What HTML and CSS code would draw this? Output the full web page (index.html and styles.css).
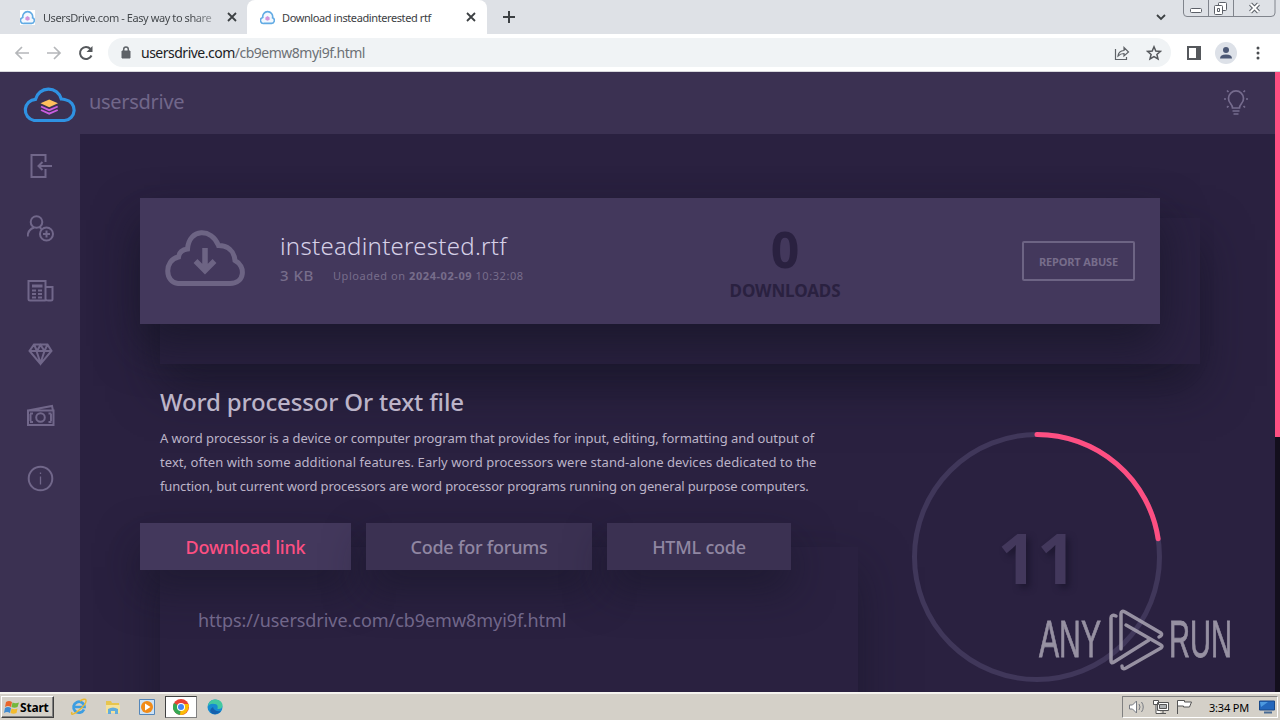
FILE: index.html
```html
<!DOCTYPE html>
<html lang="en">

<head>
    <meta charset="UTF-8">
    <meta name="viewport" content="width=device-width, initial-scale=1.0">
    <title>Download insteadinterested rtf</title>
    <link rel="stylesheet" href="styles.css">
</head>

<body>
    <svg width="0" height="0" class="defs">
        <symbol id="favicon" viewBox="0 0 14 14">
            <path d="M4 12.500h6.500a2.700 2.700 0 0 0 1.200-5.200A4.700 4.700 0 0 0 7 1.500 4.700 4.700 0 0 0 2.600 7 2.800 2.800 0 0 0 4 12.500z" fill="#f3f8fe" stroke="#62abe4" stroke-width="1.500"/>
            <path d="M5 7l2-1.500L9 7v2L7 10 5 9z" fill="#d294dc"/>
        </symbol>
        <symbol id="close" viewBox="0 0 10 10">
            <path d="M1 1l8 8M9 1L1 9" stroke="#3c4043" stroke-width="1.800"/>
        </symbol>
    </svg>

    <div class="tab-strip">
        <div class="tab">
            <svg class="favicon boxed"><use href="#favicon"/></svg>
            <span class="tab-title fade">UsersDrive.com - Easy way to share</span>
            <svg class="tab-close"><use href="#close"/></svg>
        </div>
        <div class="tab active">
            <svg class="favicon"><use href="#favicon"/></svg>
            <span class="tab-title">Download insteadinterested rtf</span>
            <svg class="tab-close"><use href="#close"/></svg>
        </div>
        <svg class="new-tab" width="12" height="12"><path d="M6 0v12M0 6h12" stroke="#3c4043" stroke-width="2"/></svg>
        <svg class="tab-search" width="10" height="7"><path d="M1 1l4 4 4-4" fill="none" stroke="#3c4043" stroke-width="1.800"/></svg>
        <svg class="window-buttons" width="94" height="18" fill="none" stroke="#80848c">
            <path d="M.5 0v13q0 3.500 3.500 3.500h84q4 0 4-3.500V0M25.500 0v16M50.500 0v16"/>
            <g stroke="#5c6068"><rect x="7.500" y="8.500" width="11" height="4" rx="1" fill="#fff"/>
            <rect x="35.500" y="2.500" width="8" height="8" rx="1" fill="#fff"/><rect x="31.500" y="5.500" width="8" height="9" rx="1" fill="#fff"/><path d="M34.500 8.500h2v3h-2z"/></g>
            <path d="M67.500 4l8 8M75.500 4l-8 8" stroke="#5c6068" stroke-width="4"/>
            <path d="M67.500 4l8 8M75.500 4l-8 8" stroke="#fff" stroke-width="2"/>
        </svg>
    </div>

    <div class="toolbar">
        <svg class="nav-icon" width="16" height="16" fill="none" stroke="#b5b7ba" stroke-width="1.700"><path d="M15 8H2M8 2L2 8l6 6"/></svg>
        <svg class="nav-icon" width="16" height="16" fill="none" stroke="#b5b7ba" stroke-width="1.700"><path d="M1 8h13M8 2l6 6-6 6"/></svg>
        <svg class="nav-icon" width="16" height="16" fill="none" stroke="#55585c" stroke-width="2"><path d="M13.500 10.500A6 6 0 1 1 12.500 4"/><path d="M14.500 1v6h-6z" fill="#55585c" stroke="none"/></svg>
        <div class="address-bar">
            <svg class="lock" width="10" height="13"><path d="M1 5h8v7H1z" fill="#5f6368" stroke="#5f6368"/><path d="M2.700 5V3.200a2.300 2.300 0 0 1 4.600 0V5" fill="none" stroke="#5f6368" stroke-width="1.500"/></svg>
            <span class="url">usersdrive.com<span>/cb9emw8myi9f.html</span></span>
            <svg class="share" width="16" height="16" fill="none" stroke="#5f6368" stroke-width="1.200"><path d="M1.500 4v10.500h11V12M4 11q.5-5 6-5.500V2.500L14.500 7 10 11V8.500Q6.500 8.500 4 11z"/></svg>
            <svg class="star" width="16" height="16" fill="none" stroke="#55585c" stroke-width="1.500"><path d="M8 1.800l1.800 4.200 4.600.4-3.500 3 1.100 4.500L8 11.500l-4 2.400 1.100-4.500-3.500-3 4.600-.4z"/></svg>
        </div>
        <svg class="side-panel" width="14" height="14"><path d="M1 1h12v12H1z" fill="none" stroke="#55585c" stroke-width="2"/><path d="M9 1h4v12H9z" fill="#55585c"/></svg>
        <svg class="profile" width="22" height="22"><circle cx="11" cy="11" r="11" fill="#dde1e8"/><circle cx="11" cy="8" r="3" fill="#4c5875"/><path d="M5 16.500q0-4 6-4t6 4z" fill="#4c5875"/></svg>
        <svg class="menu" width="4" height="14" fill="#4a4d51"><circle cx="2" cy="2" r="1.500"/><circle cx="2" cy="7" r="1.500"/><circle cx="2" cy="12" r="1.500"/></svg>
    </div>

    <div class="page">
        <header class="site-header">
            <svg class="logo" width="54" height="38" fill="none">
                <path d="M12 35.500h30.500a10.500 10.500 0 0 0 1-20.800q-2-.5-4.200-.7A13.300 13.300 0 0 0 13.500 14.300 10.700 10.700 0 0 0 12 35.500z" stroke="#2f92e2" stroke-width="3.200"/>
                <path d="M18.500 18.200l8.700-3.700 8.800 3.700-8.800 4z" fill="#ffc05c"/>
                <path d="M19 21.500l8.200 3.700 8.500-3.700" stroke="#c95de0" stroke-width="1.900"/>
                <path d="M19 25l8.200 3.700 8.500-3.700" stroke="#c95de0" stroke-width="1.900"/>
            </svg>
            <span class="site-name">usersdrive</span>
            <svg class="bulb" width="26" height="28" fill="none" stroke="#766c8e" stroke-width="1.700">
                <path d="M9.500 19q0-2-2-4.500a7.500 7.500 0 1 1 11 0q-2 2.500-2 4.500z"/><path d="M9.500 22h7M10.500 25h5"/>
                <path d="M1 10h2M23 10h2M4 1.500l1.500 1.500M22 1.500L20.500 3M4 18.500l1.500-1.500M22 18.500L20.500 17"/>
            </svg>
        </header>

        <div class="page-body">
            <nav class="sidebar">
                <svg width="28" height="28"><path d="M18.500 10V3H4.500v22h14v-8M25 14H11.500M15.500 10l-4 4 4 4"/></svg>
                <svg width="28" height="28"><circle cx="9.500" cy="7" r="5.800"/><path d="M.7 21.500q0-7 6.500-9M12.500 12l2 2"/><circle cx="19.500" cy="19" r="6.500"/><path d="M19.500 15.500v7M16 19h7"/></svg>
                <svg width="28" height="28"><path d="M18.500 23.500H3Q1.500 23.500 1.500 22V4h17v18q0 1.500 3 1.500H24q1.500 0 1.500-1.500V10h-7"/><path d="M5 13.500h4M11 13.500h4M5 17h4M11 17h4M5 20.500h4M11 20.500h4"/><path d="M5 9h10.500" stroke-width="3"/></svg>
                <svg width="28" height="28"><path d="M7 4.500h13.500l4 6.500L13.500 24 2.500 11zM2.500 11h22M9.500 11l4 12 4-12M7 4.500l3 6.500 3.500-6 4 6 3-6.500"/></svg>
                <svg width="28" height="28"><path d="M1 8.500h25.500V23H1zM1 8.500l24-4.500 1 4.500"/><circle cx="13.500" cy="15.500" r="4.300"/><path d="M3.500 12v7M24 12v7M3 11.500h3M3 20h3M24.500 11.500h-3M24.500 20h-3"/></svg>
                <svg width="28" height="28"><circle cx="13.500" cy="13.500" r="11.800"/><path d="M13.500 11.500v8M13.500 7.500v1.500" stroke-width="1.300"/></svg>
            </nav>

            <main class="content">
                <section class="file-panel">
                    <div class="file-card">
                        <svg class="file-icon" width="82" height="58" fill="none" stroke="#6d6484" stroke-width="5">
                            <path d="M14 53.500h52C81 53.500 82 36 71 30.500 70 20 63 15.500 54.500 15.500 48-2 25-2 23.500 19q-8 1-9 8C-.5 30 1 53 14 53.500z"/>
                            <path d="M41 18v21M31.500 31l9.500 9.500 9.500-9.500" stroke-width="5.500"/>
                        </svg>
                        <div class="file-info">
                            <h1>insteadinterested.rtf</h1>
                            <div class="file-meta">
                                <span class="size">3 KB</span>
                                <span class="date">Uploaded on <b>2024-02-09</b> 10:32:08</span>
                            </div>
                        </div>
                        <div class="downloads">
                            <strong>0</strong>
                            <span>DOWNLOADS</span>
                        </div>
                        <a class="report" href="#"><span>REPORT ABUSE</span></a>
                    </div>
                </section>

                <div class="columns">
                    <div class="left-column">
                        <h2>Word processor Or text file</h2>
                        <p class="description">
                            <span class="line-1">A word processor is a device or computer program that provides for input, editing, formatting and output of</span><br>
                            <span class="line-2">text, often with some additional features. Early word processors were stand-alone devices dedicated to the</span><br>
                            <span class="line-3">function, but current word processors are word processor programs running on general purpose computers.</span>
                        </p>
                        <div class="link-panel">
                            <div class="link-tabs">
                                <a class="link-tab selected" href="#">Download link</a>
                                <a class="link-tab forum" href="#">Code for forums</a>
                                <a class="link-tab html" href="#">HTML code</a>
                            </div>
                            <div class="link-text">https://usersdrive.com/cb9emw8myi9f.html</div>
                        </div>
                    </div>
                    <div class="countdown">
                        <svg width="250" height="250" fill="none" stroke-width="5">
                            <circle cx="125" cy="125" r="122.500" stroke="#40375a"/>
                            <circle cx="125" cy="125" r="122.500" stroke="#fd4f82" stroke-linecap="round" stroke-dasharray="174 700" transform="rotate(-90 125 125)"/>
                        </svg>
                        <span class="seconds">11</span>
                    </div>
                </div>
            </main>
        </div>

        <div class="scrollbar"></div>

        <svg class="watermark" width="206" height="66">
            <text x="2" y="50" textLength="62" lengthAdjust="spacingAndGlyphs">ANY</text>
            <text x="132" y="50" textLength="63" lengthAdjust="spacingAndGlyphs">RUN</text>
            <g fill="none" stroke="#aaa5b4" stroke-width="3.500" stroke-linecap="round" stroke-linejoin="round">
                <path d="M79 9q-5-2-5 2v43q0 3 3 1l35-22"/>
                <path d="M84 42V7q0-4 4-2l36 21q2 2-2 4"/>
                <path d="M89 18l35 20q2 1 0 3L89 61q-4 2-4-2"/>
            </g>
        </svg>
    </div>

    <div class="taskbar">
        <div class="start">
            <svg width="16" height="16"><path d="M2 3q3-2 6 0L7 8Q4 6 1 8z" fill="#e8652b"/><path d="M8.500 3.500q3 1.500 6.500 0L13.500 8q-3 1.500-6 0z" fill="#73b83b"/><path d="M1 9q3-2 6 0l-1 5q-3-2-6 0z" fill="#3f8bd2"/><path d="M7.500 9.500q3 1.500 6 0l-1 4.500q-3 1.500-6 0z" fill="#f3bb2d"/></svg>
            <span>Start</span>
        </div>
        <div class="quick-launch">
            <div class="app"><svg width="18" height="18" fill="none"><path d="M14 11.500A5.500 5.500 0 1 1 14.500 9H5" stroke="#3d9ee2" stroke-width="2.700"/><path d="M2 14Q0 19 8 13q9-7 8-11-1-2-6 1" stroke="#eab931" stroke-width="1.500"/></svg></div>
            <div class="app"><svg width="18" height="18"><path d="M2 3h5l1 2h7v10H2z" fill="#e7c54e"/><path d="M2 7h14v8H2z" fill="#f5e29a"/><path d="M4 11q5-3 10 0v5h-3v-3H7v3H4z" fill="#62addc"/></svg></div>
            <div class="app"><svg width="18" height="18"><path d="M1.500 1.500h15v15h-15z" fill="#cce2f6" stroke="#5486b9"/><circle cx="9" cy="9" r="6" fill="#f18b18"/><path d="M7 5.500l5.500 3.500L7 12.500z" fill="#fff"/></svg></div>
            <div class="app running"><svg width="16" height="16"><circle cx="8" cy="8" r="8" fill="#e94235"/><path d="M8 8L1 4a8 8 0 0 0 6.500 12z" fill="#34a853"/><path d="M8 8h7.500A8 8 0 0 1 7 16z" fill="#fbbc05"/><path d="M8 5h7.500a8 8 0 0 1 .5 3H8z" fill="#fbbc05"/><circle cx="8" cy="8" r="4" fill="#fff"/><circle cx="8" cy="8" r="3" fill="#4285f4"/></svg></div>
            <div class="app"><svg width="16" height="16"><circle cx="8" cy="8" r="7.500" fill="#168bd1"/><path d="M1 7Q2 0 9 .5q7 1 6.500 7-1 3-5 2.500 1-5-3-5-4-1-6.500 2z" fill="#42c9a1"/><path d="M6 8q1 5 8 4-4 5-9 2.500Q1 11 6 8z" fill="#1560ad"/></svg></div>
        </div>
        <div class="tray">
            <svg width="18" height="16" fill="#fff" stroke="#777b82"><path d="M1.500 6h3l4-4v12l-4-4h-3z"/><path d="M11 5q2 3 0 6M13.500 3q3.500 5 0 10" fill="none"/></svg>
            <svg width="18" height="16" fill="#fff" stroke="#555"><path d="M5.500 3.500h11v8h-11zM8 14.500h6M11 11.500v3M1.500 1.500h5v4h-5zM4 5.500v9h5"/><path d="M7.500 5.500h7v4h-7z" fill="#aeb1b3"/></svg>
            <svg width="18" height="16" fill="#fff" stroke="#555"><path d="M1.500 15V1.500h7v1.500h7l-2 5h-6V7H2"/></svg>
            <span class="clock">3:34 PM</span>
            <svg class="desktop" width="16" height="14"><path d="M.5 1h15v9H.5z" fill="#2367bc" stroke="#184989"/><path d="M1 2h8l-7 5z" fill="#4c99df"/><path d="M5 12.500h8" stroke="#486b94" stroke-width="2"/></svg>
        </div>
    </div>
</body>

</html>
```
FILE: styles.css
```css
body {
    font-family: "Noto Sans", "Liberation Sans", sans-serif;
    margin: 0;
    width: 1280px;
    height: 720px;
    overflow: hidden;
    display: flex;
    flex-direction: column;
}

* {
    box-sizing: border-box;
}

a {
    text-decoration: none;
}

svg {
    flex: none;
}

.defs {
    position: absolute;
}

/* browser window */
.tab-strip {
    height: 34px;
    background-color: #dee1e6;
    display: flex;
    flex: none;
    align-items: center;
}

.tab {
    display: flex;
    align-items: center;
    height: 34px;
    width: 247px;
    padding: 0 15px 0 20px;
    font-size: 11px;
    color: #45494d;
}

.tab.active {
    background-color: #fff;
    border-radius: 8px 8px 0 0;
    width: 240px;
    padding: 0 11px 0 13px;
    color: #3c4043;
}

.favicon {
    width: 15px;
    height: 15px;
    margin-right: 7px;
}

.favicon.boxed {
    background-color: #fff;
    margin-right: 8px;
}

.tab-title {
    flex: 1;
    white-space: nowrap;
    letter-spacing: -0.400px;
}

.tab-title.fade {
    flex: none;
    width: 174px;
    margin-right: 10px;
    letter-spacing: -0.420px;
    -webkit-mask-image: linear-gradient(to right, #000 85%, rgba(0, 0, 0, 0.3));
    mask-image: linear-gradient(to right, #000 85%, rgba(0, 0, 0, 0.3));
}

.tab-close {
    width: 10px;
    height: 10px;
}

.new-tab {
    margin-left: 16px;
}

.tab-search {
    margin-left: auto;
    margin-right: 17px;
}

.window-buttons {
    align-self: flex-start;
    margin-right: 3px;
}

.toolbar {
    height: 38px;
    flex: none;
    display: flex;
    align-items: center;
    background-color: #fff;
    border-bottom: 1px solid #d7d7dc;
    padding: 0 20px 0 14px;
}

.nav-icon {
    margin-right: 16px;
}

.address-bar {
    display: flex;
    align-items: center;
    height: 29px;
    width: 1063px;
    margin-left: -2px;
    padding: 0 9px 0 13px;
    border-radius: 15px;
    background-color: #f0f3f5;
}

.url {
    margin-left: 10px;
    font-size: 14px;
    color: #202124;
    letter-spacing: -0.500px;
}

.url span {
    color: #6d7176;
}

.share {
    margin-left: auto;
}

.star {
    margin-left: 16px;
}

.side-panel {
    margin-left: 16px;
}

.profile {
    margin-left: 14px;
}

.menu {
    margin-left: auto;
}

/* site */
.page {
    position: relative;
    height: 620px;
    flex: none;
    overflow: hidden;
    background-color: #2a2140;
}

.site-header {
    display: flex;
    align-items: center;
    height: 62px;
    background-color: #3b3152;
    padding: 0 31px 0 22px;
}

.logo {
    margin-top: 1px;
}

.site-name {
    margin: -4px 0 0 13px;
    font-size: 20px;
    letter-spacing: -0.300px;
    color: #71678a;
}

.bulb {
    margin-left: auto;
}

.page-body {
    display: flex;
    height: 558px;
}

.sidebar {
    width: 80px;
    flex: none;
    background-color: #3b3152;
    display: flex;
    flex-direction: column;
    align-items: center;
    gap: 34.500px;
    padding: 18px 0 0 1px;
}

.sidebar svg {
    fill: none;
    stroke: #71678a;
    stroke-width: 2;
}

.content {
    flex: 1;
    padding: 64px 75px 0 80px;
}

.file-panel {
    display: flex;
    width: 1040px;
    height: 146px;
    margin-top: 20px;
    background-color: #2a2140;
    box-shadow: 0 22px 45px rgba(20, 20, 35, 0.600);
}

.file-card {
    display: flex;
    flex: none;
    width: 1020px;
    height: 126px;
    margin: -20px 0 0 -20px;
    background-color: #43385c;
    box-shadow: 0 22px 45px rgba(20, 20, 35, 0.650);
    padding: 0 25px 0 24px;
}

.file-icon {
    margin-top: 32px;
}

.file-info {
    width: 300px;
    margin: 33px 0 0 34px;
}

.file-info h1 {
    margin: 0;
    font-size: 24px;
    line-height: 30px;
    font-weight: 300;
    letter-spacing: 0.270px;
    color: #d6d0e8;
    white-space: nowrap;
}

.file-meta {
    display: flex;
    align-items: center;
    height: 28px;
    color: #776d8b;
}

.size {
    width: 53px;
    font-size: 15px;
    font-weight: 500;
    letter-spacing: 0.500px;
}

.date {
    font-size: 11px;
    letter-spacing: 0.560px;
    white-space: nowrap;
}

.downloads {
    display: flex;
    flex-direction: column;
    align-items: center;
    width: 130px;
    margin: 24px 0 0 140px;
    color: #2a2140;
}

.downloads strong {
    font-size: 50px;
    line-height: 54px;
}

.downloads span {
    font-size: 17px;
    line-height: 30px;
    font-weight: 700;
    letter-spacing: -0.100px;
}

.report {
    display: flex;
    align-items: center;
    justify-content: center;
    align-self: center;
    width: 113px;
    height: 40px;
    margin-left: auto;
    border: 2px solid #6d6484;
    border-radius: 2px;
    font-size: 11px;
    font-weight: 700;
    letter-spacing: -0.150px;
    color: #776d8b;
}

.columns {
    display: flex;
}

.left-column {
    width: 698px;
    flex: none;
}

.left-column h2 {
    margin: 21px 0 0;
    font-size: 24px;
    line-height: 34px;
    font-weight: 500;
    letter-spacing: -0.160px;
    color: #bcb4c8;
}

.description {
    margin: 7px 0 0;
    font-size: 13px;
    line-height: 24px;
    color: #bcb4c8;
    white-space: nowrap;
}

.line-1 {
    letter-spacing: -0.040px;
}

.line-2 {
    letter-spacing: 0.070px;
}

.line-3 {
    letter-spacing: -0.145px;
}

.link-panel {
    height: 270px;
    margin-top: 49px;
    display: flex;
    flex-direction: column;
    box-shadow: 0 20px 45px rgba(20, 20, 35, 0.500);
    background-color: #2a2140;
}

.link-tabs {
    display: flex;
    gap: 15px;
    margin: -24px 0 0 -20px;
}

.link-tab {
    display: flex;
    align-items: center;
    justify-content: center;
    width: 211px;
    height: 47px;
    font-size: 18px;
    font-weight: 500;
    letter-spacing: -0.220px;
    color: #9087a2;
    background-color: #3b3152;
    box-shadow: 0 20px 40px rgba(20, 20, 35, 0.500);
}

.link-tab.selected {
    color: #fd4f82;
    background-color: #43385c;
}

.link-tab.forum {
    width: 226px;
}

.link-tab.html {
    width: 184px;
}

.link-text {
    position: relative;
    margin: 36px 0 0 38px;
    font-size: 18px;
    line-height: 28px;
    letter-spacing: -0.050px;
    color: #71678a;
}

.countdown {
    display: grid;
    place-items: center;
    width: 250px;
    height: 250px;
    margin: 68px 0 0 54px;
}

.countdown > * {
    grid-area: 1 / 1;
}

.seconds {
    font-family: "Open Sans", sans-serif;
    font-size: 69px;
    font-weight: 700;
    color: #43385c;
    text-shadow: 4px 4px 6px #1e1831;
}

.scrollbar {
    position: absolute;
    top: 0;
    right: 0;
    width: 5px;
    height: 620px;
    background: linear-gradient(#fd4f82 365px, #130f1d 365px);
}

.watermark {
    position: absolute;
    left: 1037px;
    top: 535px;
    fill: #aaa5b4;
    font-family: "Liberation Sans", sans-serif;
    font-size: 52px;
    opacity: 0.850;
}

.watermark text {
    stroke: #aaa5b4;
    stroke-width: 0.800;
}

/* windows taskbar */
.taskbar {
    display: flex;
    align-items: center;
    height: 28px;
    flex: none;
    background-color: #d4d0c8;
    box-shadow: inset 0 2px #f5f3ef;
    padding: 2px 2px 0 1px;
    font-size: 11px;
    color: #000;
}

.start {
    display: flex;
    align-items: center;
    width: 53px;
    height: 22px;
    padding-left: 2px;
    border: 1px solid #fff;
    border-right-color: #404040;
    border-bottom-color: #404040;
    box-shadow: inset -1px -1px #808080;
    font-size: 12px;
    font-weight: 700;
    letter-spacing: -0.200px;
}

.quick-launch {
    display: flex;
    gap: 2px;
    margin-left: 9px;
}

.app {
    display: grid;
    place-items: center;
    width: 32px;
    height: 22px;
}

.app.running {
    background-color: #fff;
    border: 1px solid #808080;
    border-top-color: #404040;
    border-left-color: #404040;
}

.tray {
    display: flex;
    align-items: center;
    width: 156px;
    height: 22px;
    margin-left: auto;
    padding-left: 5px;
    border: 1px solid #808080;
    border-right-color: #fff;
    border-bottom-color: #fff;
    gap: 6px;
}

.clock {
    margin-left: 9px;
    width: 44px;
    letter-spacing: -0.200px;
    white-space: nowrap;
}
```
